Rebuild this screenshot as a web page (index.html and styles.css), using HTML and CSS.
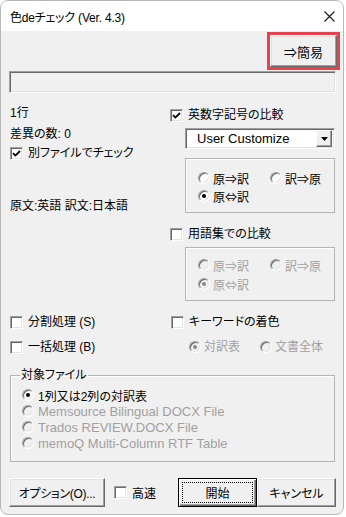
FILE: index.html
```html
<!DOCTYPE html>
<html lang="ja">
<head>
  <meta charset="UTF-8" />
  <title>色deチェック</title>
  <link rel="stylesheet" href="styles.css">
</head>
<body>
  <div class="window">
    <div class="titlebar">
      <span class="title">色deチェック (Ver. 4.3)</span>
      <svg class="close" width="11" height="11" viewBox="0 0 11 11">
        <path d="M0.5 0.5 L10.5 10.5 M10.5 0.5 L0.5 10.5" stroke="#1a1a1a" stroke-width="1.1" fill="none"/>
      </svg>
    </div>

    <div class="client">
      <div class="top-row">
        <div class="mark"><div class="btn simple">⇒簡易</div></div>
      </div>
      <div class="progress"></div>

      <div class="upper">
        <div class="col-left">
          <div class="row r1">1行</div>
          <div class="row r2">差異の数: 0</div>
          <div class="row r3 check"><span class="box"><svg width="9" height="9" viewBox="0 0 9 9"><path d="M1 4.2 L3.4 6.6 L8 2" stroke="#000" stroke-width="1.8" fill="none"/></svg></span>別ファイルでチェック</div>
          <div class="row r4">原文:英語 訳文:日本語</div>
        </div>

        <div class="col-right">
          <div class="row check"><span class="box"><svg width="9" height="9" viewBox="0 0 9 9"><path d="M1 4.2 L3.4 6.6 L8 2" stroke="#000" stroke-width="1.8" fill="none"/></svg></span>英数字記号の比較</div>
          <div class="combo">
            <span class="combo-text en">User Customize</span>
            <span class="combo-btn"><svg width="7" height="4" viewBox="0 0 7 4"><path d="M0 0 H7 L3.5 4 Z" fill="#000"/></svg></span>
          </div>
          <div class="group g1">
            <div class="opt"><span class="radio"></span>原⇒訳</div>
            <div class="opt"><span class="radio"></span>訳⇒原</div>
            <div class="opt"><span class="radio on"></span>原⇔訳</div>
          </div>
          <div class="row check gap-top"><span class="box"></span>用語集での比較</div>
          <div class="group g2 disabled">
            <div class="opt"><span class="radio"></span>原⇒訳</div>
            <div class="opt"><span class="radio"></span>訳⇒原</div>
            <div class="opt"><span class="radio on"></span>原⇔訳</div>
          </div>
        </div>
      </div>

      <div class="lower">
        <div class="row check"><span class="box"></span>分割処理 (S)</div>
        <div class="row check"><span class="box"></span>キーワードの着色</div>
        <div class="row check"><span class="box"></span>一括処理 (B)</div>
        <div class="row radios disabled">
          <div class="opt"><span class="radio on"></span>対訳表</div>
          <div class="opt"><span class="radio"></span>文書全体</div>
        </div>
      </div>

      <fieldset class="target">
        <legend>対象ファイル</legend>
        <div class="opt"><span class="radio on"></span>1列又は2列の対訳表</div>
        <div class="opt disabled en"><span class="radio"></span>Memsource Bilingual DOCX File</div>
        <div class="opt disabled en"><span class="radio"></span>Trados REVIEW.DOCX File</div>
        <div class="opt disabled en"><span class="radio"></span>memoQ Multi-Column RTF Table</div>
      </fieldset>

      <div class="footer">
        <div class="btn options">オプション(O)...</div>
        <div class="check fast"><span class="box"></span>高速</div>
        <div class="btn start">開始</div>
        <div class="btn cancel">キャンセル</div>
      </div>
    </div>
  </div>
</body>
</html>
```

FILE: styles.css
```css
* {
  box-sizing: border-box;
}

body {
  margin: 0;
  background: #fff;
  font-family: 'Liberation Sans', 'Noto Sans CJK JP', sans-serif;
  font-size: 12px;
  font-feature-settings: "palt";
  color: #000;
}

.en {
  font-size: 13px;
}

.window {
  width: 344px;
  height: 515px;
  border: 1px solid #b9b9b9;
  border-radius: 8px;
  overflow: hidden;
  background: #f0f0f0;
  display: flex;
  flex-direction: column;
}

.titlebar {
  flex: none;
  height: 30px;
  background: #fff;
  display: flex;
  align-items: center;
  justify-content: space-between;
  padding: 0 8px 0 9px;
}

.title {
  font-size: 12px;
  letter-spacing: -0.2px;
}

.client {
  padding: 0 7px 0 8px;
}

/* buttons */
.btn {
  display: flex;
  align-items: center;
  justify-content: center;
  background: #f0f0f0;
  border: 1px solid;
  border-color: #fff #696969 #696969 #fff;
  box-shadow: inset -1px -1px #a0a0a0, inset 1px 1px #e3e3e3;
}

.top-row {
  display: flex;
  justify-content: flex-end;
  margin-top: 1px;
}

.mark {
  width: 73px;
  height: 38px;
  margin-right: -4px;
  border: 3px solid #e6424b;
}

.simple {
  width: 100%;
  height: 100%;
  font-family: 'Noto Sans CJK JP', sans-serif;
  font-size: 13px;
}

.progress {
  margin-top: 1px;
  height: 22px;
  border: 1px solid;
  border-color: #a0a0a0 #fff #fff #a0a0a0;
  box-shadow: inset 1px 1px #696969, inset -1px -1px #e3e3e3;
}

/* check boxes & radios */
.row {
  height: 18px;
  line-height: 18px;
  white-space: nowrap;
}

.check {
  display: flex;
  align-items: center;
  gap: 5px;
}

.box {
  width: 13px;
  height: 13px;
  flex: none;
  display: flex;
  align-items: center;
  justify-content: center;
  background: #fff;
  border: 1px solid;
  border-color: #a0a0a0 #fff #fff #a0a0a0;
  box-shadow: inset 1px 1px #696969, inset -1px -1px #e3e3e3;
}

.opt {
  display: flex;
  align-items: center;
  gap: 3px;
  white-space: nowrap;
}

.radio {
  width: 12px;
  height: 12px;
  flex: none;
  border-radius: 50%;
  background: #fff;
  border: 1px solid;
  border-color: #a0a0a0 #fff #fff #a0a0a0;
  box-shadow: inset 1px 1px #696969, inset -1px -1px #e3e3e3;
  display: flex;
  align-items: center;
  justify-content: center;
}

.radio.on::after {
  content: "";
  width: 4px;
  height: 4px;
  border-radius: 50%;
  background: #000;
}

.disabled {
  color: #a0a0a0;
}

.disabled .radio {
  background: #f0f0f0;
}

.disabled .radio.on::after {
  background: #8a8a8a;
}

/* upper part */
.upper {
  display: flex;
}

.col-left {
  width: 161px;
  padding: 11px 0 0 1px;
}

.r2 {
  margin-top: 3px;
}

.r3 {
  margin-top: 1px;
}

.r4 {
  margin-top: 35px;
}

.col-right {
  flex: 1;
  padding-top: 13px;
}

.combo {
  margin: 4px 1px 0 15px;
  height: 21px;
  display: flex;
  align-items: center;
  justify-content: space-between;
  background: #fff;
  border: 1px solid;
  border-color: #a0a0a0 #fff #fff #a0a0a0;
  box-shadow: inset 1px 1px #696969, inset -1px -1px #e3e3e3;
  padding: 2px 2px 2px 11px;
}

.combo-btn {
  width: 16px;
  height: 17px;
  display: flex;
  align-items: center;
  justify-content: center;
  background: #f0f0f0;
  border: 1px solid;
  border-color: #fff #696969 #696969 #fff;
  box-shadow: inset -1px -1px #a0a0a0;
}

.group {
  margin: 9px 1px 0 15px;
  border: 1px solid #b4b4b4;
  box-shadow: inset 1px 1px #fff;
  display: grid;
  grid-template-columns: 72px auto;
  grid-auto-rows: 18px;
  padding-left: 12px;
  font-family: 'Noto Sans CJK JP', sans-serif;
}

.g1 {
  height: 55px;
  padding-top: 10px;
}

.g2 {
  margin-top: 4px;
  height: 54px;
  padding-top: 8px;
  row-gap: 1px;
}

.gap-top {
  margin-top: 12px;
}

/* lower part */
.lower {
  display: grid;
  grid-template-columns: 161px 1fr;
  row-gap: 7px;
  margin-top: 12px;
  padding-left: 1px;
}

.radios {
  display: flex;
  gap: 20px;
  margin-left: 18px;
}

.target {
  margin: 11px 1px 0 1px;
  border: 1px solid #b4b4b4;
  box-shadow: inset 1px 1px #fff;
  padding: 4px 10px 10px 11px;
  min-width: 0;
}

.target legend {
  padding: 0 1px;
  margin-left: -2px;
  line-height: 16px;
}

.target .opt {
  height: 16px;
  gap: 4px;
}

/* footer */
.footer {
  margin-top: 16px;
  height: 29px;
  display: flex;
  align-items: stretch;
}

.options {
  width: 96px;
  letter-spacing: -0.3px;
}

.fast {
  margin-left: 9px;
}

.start {
  margin-left: auto;
  width: 79px;
  border: 1px solid #000;
  box-shadow: inset 1px 1px #fff, inset -1px -1px #696969, inset -2px -2px #a0a0a0;
  outline: 1px dotted #000;
  outline-offset: -5px;
}

.cancel {
  width: 79px;
}
```
